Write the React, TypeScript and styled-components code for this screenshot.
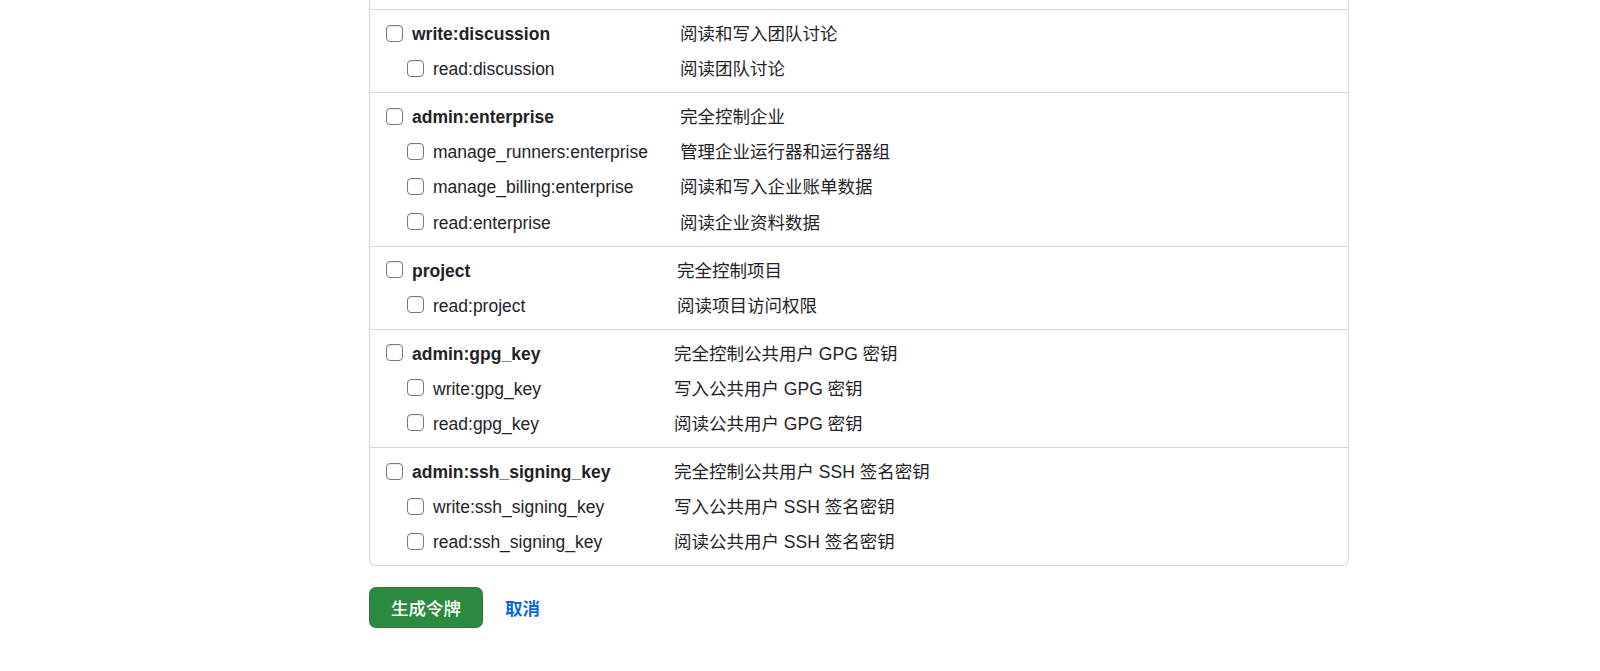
import styled, { createGlobalStyle } from 'styled-components'

type Scope = {
  name: string
  desc: string
}

type ScopeGroup = Scope & {
  labelWidth: number
  children: Scope[]
}

const SCOPE_GROUPS: ScopeGroup[] = [
  {
    name: 'write:discussion',
    desc: '阅读和写入团队讨论',
    labelWidth: 294,
    children: [{ name: 'read:discussion', desc: '阅读团队讨论' }],
  },
  {
    name: 'admin:enterprise',
    desc: '完全控制企业',
    labelWidth: 294,
    children: [
      { name: 'manage_runners:enterprise', desc: '管理企业运行器和运行器组' },
      { name: 'manage_billing:enterprise', desc: '阅读和写入企业账单数据' },
      { name: 'read:enterprise', desc: '阅读企业资料数据' },
    ],
  },
  {
    name: 'project',
    desc: '完全控制项目',
    labelWidth: 291,
    children: [{ name: 'read:project', desc: '阅读项目访问权限' }],
  },
  {
    name: 'admin:gpg_key',
    desc: '完全控制公共用户 GPG 密钥',
    labelWidth: 288,
    children: [
      { name: 'write:gpg_key', desc: '写入公共用户 GPG 密钥' },
      { name: 'read:gpg_key', desc: '阅读公共用户 GPG 密钥' },
    ],
  },
  {
    name: 'admin:ssh_signing_key',
    desc: '完全控制公共用户 SSH 签名密钥',
    labelWidth: 288,
    children: [
      { name: 'write:ssh_signing_key', desc: '写入公共用户 SSH 签名密钥' },
      { name: 'read:ssh_signing_key', desc: '阅读公共用户 SSH 签名密钥' },
    ],
  },
]

const GlobalStyle = createGlobalStyle`
  html, body {
    margin: 0;
    background: #ffffff;
    overflow: hidden;
  }
  body {
    font-family: "Liberation Sans", "Noto Sans CJK SC", sans-serif;
    font-size: 17.5px;
    color: #1f2328;
  }
`

const ScopeRow = ({ scope, labelWidth, sub }: { scope: Scope; labelWidth: number; sub?: boolean }) => (
  <Div_Row labelWidth={labelWidth}>
    <Label_Scope sub={sub}>
      <Input_Check type="checkbox" />
      <Span_Name sub={sub}>{scope.name}</Span_Name>
    </Label_Scope>
    <Span_Desc>{scope.desc}</Span_Desc>
  </Div_Row>
)

export default function App() {
  return (
    <Div_Page>
      <GlobalStyle />
      <Main>
        <Div_Scopes>
          {/* bottom of the group scrolled above the fold */}
          <Div_Tail />
          {SCOPE_GROUPS.map(group => (
            <Div_Group key={group.name}>
              <ScopeRow scope={group} labelWidth={group.labelWidth} />
              {group.children.map(child => (
                <ScopeRow key={child.name} scope={child} labelWidth={group.labelWidth} sub />
              ))}
            </Div_Group>
          ))}
        </Div_Scopes>
        <Div_Actions>
          <Button_Primary type="button">生成令牌</Button_Primary>
          <A_Cancel href="#">取消</A_Cancel>
        </Div_Actions>
      </Main>
    </Div_Page>
  )
}

const Div_Page = styled.div`
  min-height: 671px;
  padding-left: 369px;
  box-sizing: border-box;
`
const Main = styled.main`
  width: 980px;
`
const Div_Scopes = styled.div`
  border: 1px solid #d0d7de;
  border-top: 0;
  border-radius: 0 0 7px 7px;
`
const Div_Tail = styled.div`
  height: 9px;
`
const Div_Group = styled.div`
  padding: 7px 16px 5px;
  border-top: 1px solid #d0d7de;
`
const Div_Row = styled.div<{ labelWidth: number }>`
  display: grid;
  grid-template-columns: ${props => props.labelWidth}px 1fr;
  align-items: center;
  height: 35.1px;
  line-height: 35px;
  white-space: nowrap;
`
const Label_Scope = styled.label<{ sub?: boolean }>`
  display: flex;
  align-items: center;
  gap: 9px;
  padding-left: ${props => (props.sub ? '21px' : '0')};
`
const Input_Check = styled.input`
  appearance: none;
  flex: none;
  width: 17px;
  height: 17px;
  margin: 0 0 3px;
  border: 1px solid #7a7a7a;
  border-radius: 4px;
  background: #ffffff;
  box-shadow: inset 0 1px 1px rgba(0, 0, 0, 0.08);
`
const Span_Name = styled.span<{ sub?: boolean }>`
  font-weight: ${props => (props.sub ? 400 : 700)};
`
const Span_Desc = styled.span`
  color: #1f2328;
`
const Div_Actions = styled.div`
  display: flex;
  align-items: center;
  gap: 22px;
  margin-top: 21px;
`
const Button_Primary = styled.button`
  height: 41px;
  padding: 0 21px;
  border: 1px solid rgba(31, 35, 40, 0.15);
  border-radius: 7px;
  background: #2c8a40;
  color: #ffffff;
  font-family: inherit;
  font-size: 17.5px;
  font-weight: 500;
  cursor: pointer;
`
const A_Cancel = styled.a`
  color: #0969da;
  font-size: 17.5px;
  font-weight: 700;
  text-decoration: none;
`
